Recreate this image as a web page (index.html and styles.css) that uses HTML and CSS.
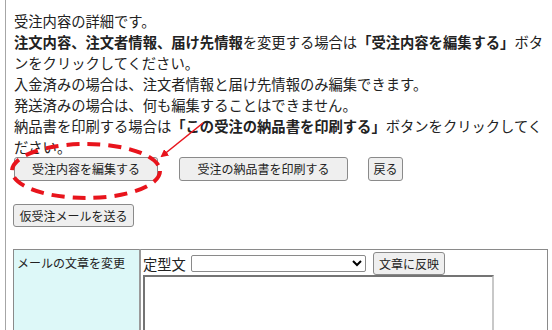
FILE: index.html
```html
<!DOCTYPE html>
<html lang="ja">
<head>
<meta charset="utf-8">
<title>受注内容の詳細</title>
<link rel="stylesheet" href="styles.css">
</head>
<body>
<div class="page">
  <div class="intro">
    受注内容の詳細です。<br>
    <b>注文内容、注文者情報、届け先情報</b>を変更する場合は<b>「受注内容を編集する」</b>ボタンをクリックしてください。<br>
    入金済みの場合は、注文者情報と届け先情報のみ編集できます。<br>
    発送済みの場合は、何も編集することはできません。<br>
    納品書を印刷する場合は<b>「この受注の納品書を印刷する」</b>ボタンをクリックしてください。
  </div>
  <div class="actions">
    <button class="btn btn-edit" type="button">受注内容を編集する</button>
    <button class="btn btn-print" type="button">受注の納品書を印刷する</button>
    <button class="btn btn-back" type="button">戻る</button>
  </div>
  <div class="actions2">
    <button class="btn btn-mail" type="button">仮受注メールを送る</button>
  </div>
  <table class="mailtable">
    <tr>
      <th class="label">メールの文章を変更</th>
      <td class="field">
        <div class="tplrow">
          <span class="tpllabel">定型文</span>
          <select class="tplselect"><option></option></select>
          <button class="btn btn-apply" type="button">文章に反映</button>
        </div>
        <textarea class="mailbody"></textarea>
      </td>
    </tr>
  </table>
</div>
<svg class="annot" width="552" height="330" viewBox="0 0 552 330">
  <defs>
    <marker id="head" markerWidth="8" markerHeight="8" refX="6" refY="4" orient="auto" markerUnits="userSpaceOnUse">
      <path d="M0,0 L8,4 L0,8 Z" fill="#e8141c"/>
    </marker>
  </defs>
  <ellipse cx="86" cy="171" rx="74" ry="27" fill="none" stroke="#e8141c" stroke-width="4" stroke-dasharray="13 8"/>
  <line x1="203" y1="123" x2="162" y2="156" stroke="#e8141c" stroke-width="1.6" marker-end="url(#head)"/>
</svg>
</body>
</html>
```
FILE: styles.css
```css
html, body {
  margin: 0;
  padding: 0;
  background: #fff;
}
body {
  font-family: "Noto Sans CJK JP", "Noto Sans", sans-serif;
  color: #222;
  position: relative;
  width: 552px;
  height: 330px;
  overflow: hidden;
}
.page {
  margin-left: 5px;
  border-left: 1px solid #a6a6a6;
  padding: 10px 0 0 8px;
  height: 330px;
  box-sizing: border-box;
  overflow: hidden;
}
.intro {
  font-size: 14.3px;
  line-height: 21px;
  width: 531px;
  text-spacing-trim: space-all;
}
.intro b {
  font-weight: bold;
}
.btn {
  font-family: "Noto Sans CJK JP", sans-serif;
  font-size: 12px;
  color: #222;
  background: #efefef;
  border: 1px solid #8a8a8a;
  border-radius: 3px;
  height: 24px;
  padding: 0;
  line-height: 20px;
  box-sizing: border-box;
  white-space: nowrap;
}
.actions {
  display: flex;
  gap: 20px;
  height: 24px;
}
.btn-edit {
  width: 144px;
}
.btn-print {
  width: 169px;
  margin-left: 1px;
}
.btn-back {
  width: 35px;
}
.actions2 {
  display: flex;
  margin-top: 23px;
  margin-left: -1px;
}
.btn-mail {
  width: 121px;
  height: 23px;
}
.mailtable {
  margin-top: 22px;
  margin-left: -1px;
  width: 535px;
  border-collapse: collapse;
  border: 1px solid #8a8a8a;
}
.label {
  width: 119px;
  background: #ddf8f8;
  border-right: 2px solid #9a9a9a;
  vertical-align: top;
  text-align: left;
  font-weight: normal;
  font-size: 12px;
  line-height: 16px;
  padding: 5px 3px;
}
.field {
  vertical-align: top;
  padding: 2px 2px 0 2px;
}
.tplrow {
  display: flex;
  align-items: center;
  height: 23px;
}
.tpllabel {
  font-size: 14.3px;
  margin-right: 5px;
}
.tplselect {
  width: 175px;
  height: 17px;
  border: 1px solid #8a8a8a;
  border-radius: 2px;
  background: #fff;
  font-size: 11px;
  padding: 0;
}
.btn-apply {
  width: 72px;
  height: 23px;
  margin-left: 7px;
}
.mailbody {
  display: block;
  width: 351px;
  height: 110px;
  box-sizing: border-box;
  border: 2px inset #c8c8c8;
  resize: none;
  margin: 0;
}
.annot {
  position: absolute;
  left: 0;
  top: 0;
  pointer-events: none;
}
```
